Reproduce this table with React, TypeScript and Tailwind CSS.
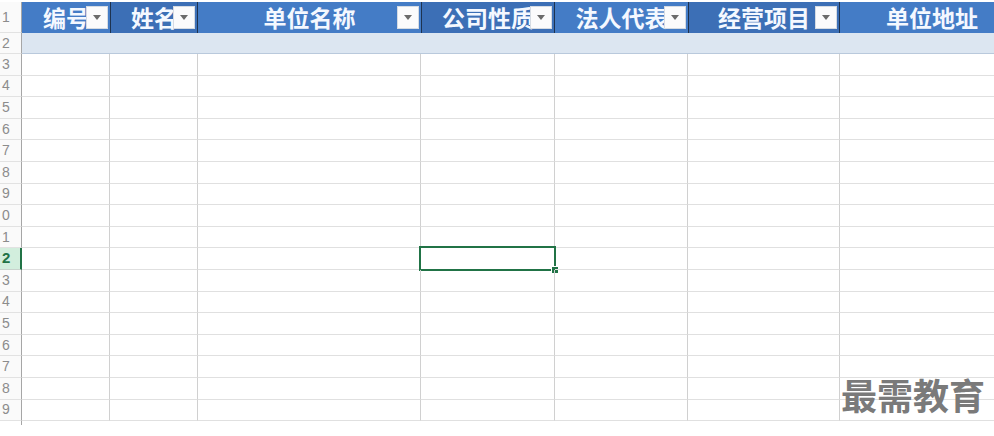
import React from "react";

const columns = [
  { title: "编号", width: "w-[88px]", dark: false, filter: true },
  { title: "姓名", width: "w-[88px]", dark: true, filter: true },
  { title: "单位名称", width: "w-[223px]", dark: false, filter: true },
  { title: "公司性质", width: "w-[134px]", dark: true, filter: true },
  { title: "法人代表", width: "w-[133px]", dark: false, filter: true },
  { title: "经营项目", width: "w-[152px]", dark: true, filter: true },
  { title: "单位地址", width: "w-[184px]", dark: false, filter: false },
];

const bodyRows = Array.from({ length: 17 }, (_, i) => i + 3);

function FilterButton() {
  return (
    <span className="absolute right-[2px] top-[4px] flex h-[23px] w-[22px] items-center justify-center border border-[#d5dbe3] bg-[#fbfbfc]">
      <svg width="8" height="5" viewBox="0 0 8 5">
        <path d="M0 0 L8 0 L4 5 Z" fill="#6b6b6b" />
      </svg>
    </span>
  );
}

function RowNumber({ n, active }: { n: number; active?: boolean }) {
  return (
    <div
      className={
        active
          ? "flex w-[22px] shrink-0 items-center border-b border-r-2 border-b-[#c8d3cc] border-r-[#217346] bg-[#d2eedd] pl-[2px] text-[15px] font-bold text-[#217346]"
          : "flex w-[22px] shrink-0 items-center border-b border-r border-b-[#e2e2e2] border-r-[#a6a6a6] bg-[#fafafa] pl-[2px] text-[14px] text-[#8c8c8c]"
      }
    >
      {n % 10}
    </div>
  );
}

export default function App() {
  return (
    <div
      className="relative h-[436px] w-[994px] overflow-hidden bg-white"
      style={{ fontFamily: '"Liberation Sans", "Noto Sans CJK SC", sans-serif' }}
    >
      <div className="h-[2px]" />

      {/* header row */}
      <div className="flex h-[31px]">
        <RowNumber n={1} />
        {columns.map((c) => (
          <div
            key={c.title}
            className={
              c.dark
                ? "relative flex shrink-0 items-center justify-center overflow-hidden border-x border-[#1e3350] bg-[#3c6fb6] " + c.width
                : "relative flex shrink-0 items-center justify-center overflow-hidden bg-[#447cc6] " + c.width
            }
          >
            <span
              className="whitespace-nowrap text-[23px] font-bold leading-none text-[#f4f8ff]"
              style={{ fontFamily: '"Noto Sans CJK SC", sans-serif' }}
            >
              {c.title}
            </span>
            {c.filter && <FilterButton />}
          </div>
        ))}
      </div>

      {/* banded row 2 */}
      <div className="flex h-[21px]">
        <RowNumber n={2} />
        <div className="flex-1 border-b border-[#b9c9dc] bg-[#dce6f1]" />
      </div>

      {bodyRows.map((r) => (
        <div key={r} className="flex h-[21.6px]">
          <RowNumber n={r} active={r === 12} />
          {columns.map((c, ci) => (
            <div
              key={c.title}
              className={"relative shrink-0 border-b border-r border-b-[#e0e0e0] border-r-[#d0d0d0] " + c.width}
            >
              {r === 12 && ci === 3 && (
                <div className="absolute -left-[2px] -top-[2px] h-[25px] w-[137px] border-2 border-[#217346]">
                  <span className="absolute -bottom-[5px] -right-[5px] h-[8px] w-[8px] border border-white bg-[#217346]" />
                </div>
              )}
            </div>
          ))}
        </div>
      ))}

      <div className="flex h-[4px]">
        <div className="w-[22px] border-r border-[#a6a6a6]" />
      </div>

      <div
        className="absolute left-[841px] top-[376px] text-[36px] font-bold leading-none text-[#7a7a7a]"
        style={{ fontFamily: '"Noto Sans CJK SC", sans-serif' }}
      >
        最需教育
      </div>
    </div>
  );
}
